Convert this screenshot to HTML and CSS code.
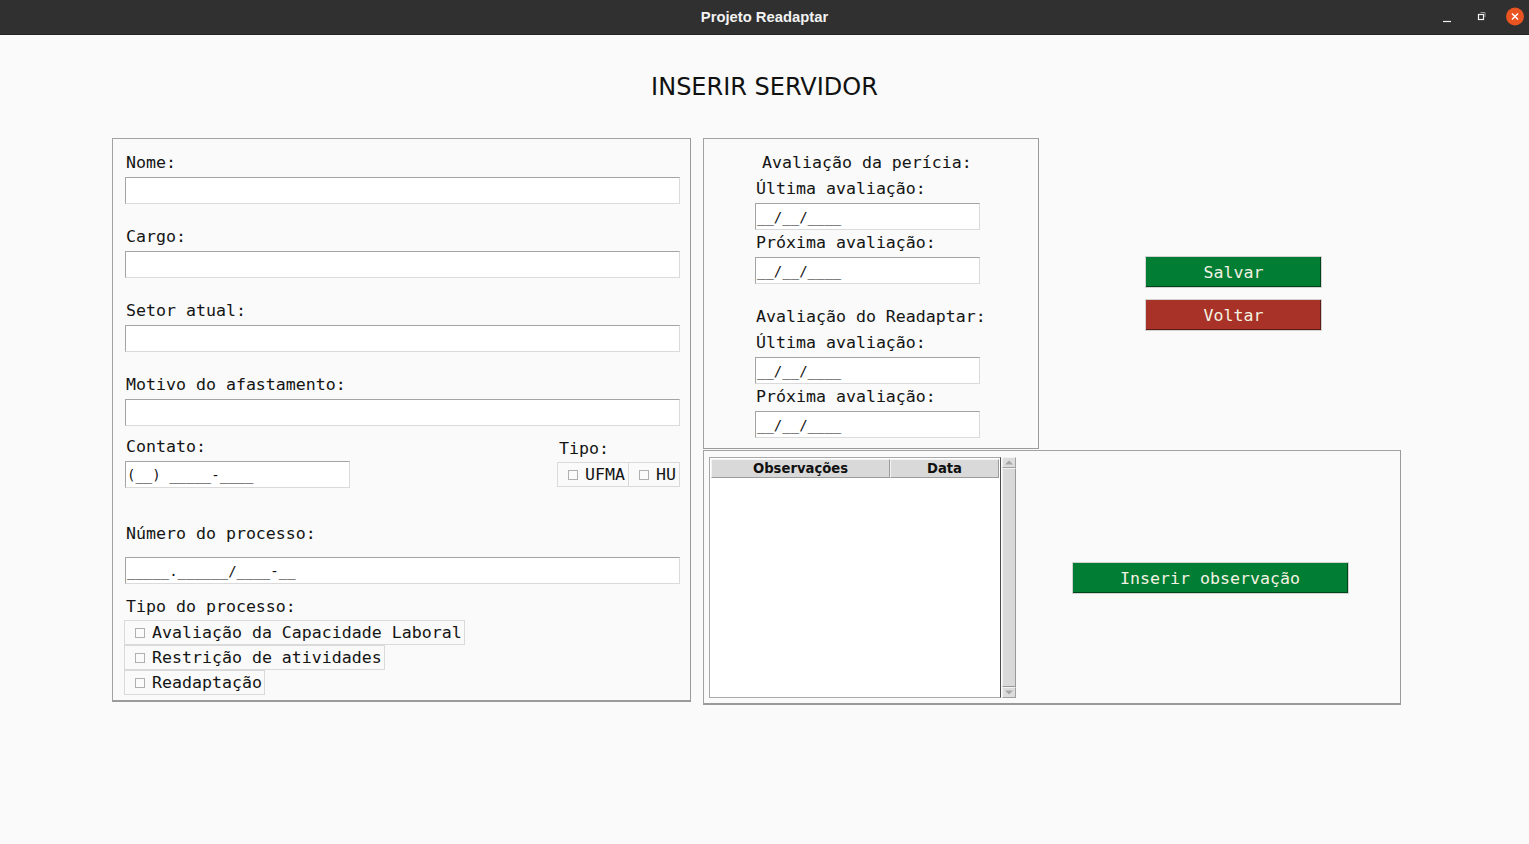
FILE: index.html
```html
<!DOCTYPE html>
<html lang="pt-BR">
<head>
<meta charset="utf-8">
<title>Projeto Readaptar</title>
<link rel="stylesheet" href="styles.css">
</head>
<body>
<header class="titlebar">
  <div></div>
  <div class="title">Projeto Readaptar</div>
  <div class="controls">
    <span class="ctl"><svg width="18" height="18" viewBox="0 0 18 18"><path d="M5 14.5h8" stroke="#f2f2f2" stroke-width="1.2"/></svg></span>
    <span class="ctl"><svg width="18" height="18" viewBox="0 0 18 18"><rect x="6.5" y="7.5" width="5" height="5" fill="none" stroke="#f2f2f2" stroke-width="1.2"/><path d="M8.5 5.5h4.5v4.5" fill="none" stroke="#9a9a9a" stroke-width="1"/></svg></span>
    <span class="ctl close"><svg width="19" height="19" viewBox="0 0 19 19"><circle cx="9.5" cy="9.5" r="9.5" fill="#e95420"/><path d="M6.3 6.3l6.4 6.4M12.7 6.3l-6.4 6.4" stroke="#fff" stroke-width="1.5"/></svg></span>
  </div>
</header>

<main class="window">
  <h1 class="heading">INSERIR SERVIDOR</h1>

  <div class="content">
    <section class="frame form">
      <div class="lbl first">Nome:</div>
      <div class="entry"></div>
      <div class="lbl gap">Cargo:</div>
      <div class="entry"></div>
      <div class="lbl gap">Setor atual:</div>
      <div class="entry"></div>
      <div class="lbl gap">Motivo do afastamento:</div>
      <div class="entry"></div>

      <div class="contact-row">
        <div class="contact">
          <div class="lbl">Contato:</div>
          <div class="entry short">(__) _____-____</div>
        </div>
        <div class="tipo">
          <div class="lbl tipo-lbl">Tipo:</div>
          <div class="checks-inline">
            <span class="check"><span class="ind"></span>UFMA</span>
            <span class="check hu"><span class="ind"></span>HU</span>
          </div>
        </div>
      </div>

      <div class="lbl numero">Número do processo:</div>
      <div class="entry numero-entry">_____.______/____-__</div>

      <div class="lbl tipo-proc">Tipo do processo:</div>
      <div class="checks-col">
        <span class="check"><span class="ind"></span>Avaliação da Capacidade Laboral</span>
        <span class="check"><span class="ind"></span>Restrição de atividades</span>
        <span class="check"><span class="ind"></span>Readaptação</span>
      </div>
    </section>

    <div class="right">
      <div class="right-top">
        <section class="frame dates">
          <div class="lbl d-title">Avaliação da perícia:</div>
          <div class="lbl d-ultima">Última avaliação:</div>
          <div class="entry date">__/__/____</div>
          <div class="lbl d-prox">Próxima avaliação:</div>
          <div class="entry date">__/__/____</div>
          <div class="lbl d-title2">Avaliação do Readaptar:</div>
          <div class="lbl d-ultima">Última avaliação:</div>
          <div class="entry date">__/__/____</div>
          <div class="lbl d-prox">Próxima avaliação:</div>
          <div class="entry date">__/__/____</div>
        </section>
        <div class="actions">
          <button class="btn green">Salvar</button>
          <button class="btn red">Voltar</button>
        </div>
      </div>

      <section class="frame obs">
        <div class="tree-wrap">
          <div class="tree">
            <div class="tree-head">
              <div class="th th-obs">Observações</div>
              <div class="th th-data">Data</div>
            </div>
            <div class="tree-body"></div>
          </div>
          <div class="scrollbar">
            <div class="arrow"><svg width="12" height="9" viewBox="0 0 12 9"><path d="M2 6.5h8L6 2.5z" fill="#a6a6a6"/></svg></div>
            <div class="trough"></div>
            <div class="arrow"><svg width="12" height="9" viewBox="0 0 12 9"><path d="M2 2.5h8L6 6.5z" fill="#a6a6a6"/></svg></div>
          </div>
        </div>
        <div class="obs-actions">
          <button class="btn green wide">Inserir observação</button>
        </div>
      </section>
    </div>
  </div>
</main>
</body>
</html>
```

FILE: styles.css
```css
* { box-sizing: border-box; }

html, body {
  margin: 0;
  padding: 0;
  background: #f9faf9;
}

body {
  width: 1529px;
  height: 844px;
  overflow: hidden;
  font-family: "DejaVu Sans Mono", monospace;
  font-size: 16.6px;
  color: #141414;
}

/* title bar */
.titlebar {
  height: 35px;
  background: #303030;
  border-bottom: 1px solid #242424;
  display: grid;
  grid-template-columns: 1fr auto 1fr;
  align-items: center;
}
.title {
  font-family: "Liberation Sans", Arial, sans-serif;
  font-weight: bold;
  font-size: 14.8px;
  color: #f2f2f2;
  padding-bottom: 1px;
}
.controls {
  justify-self: end;
  display: flex;
  align-items: center;
  gap: 16px;
  padding-right: 5px;
  padding-bottom: 2px;
}
.ctl { display: flex; width: 18px; height: 19px; align-items: center; justify-content: center; }
.ctl svg { display: block; }

/* heading */
.heading {
  margin: 38px 0 37px;
  height: 28px;
  line-height: 28px;
  text-align: center;
  font-family: "DejaVu Sans", sans-serif;
  font-weight: normal;
  font-size: 24px;
  color: #111;
}

.content {
  display: flex;
  align-items: flex-start;
  padding-left: 112px;
}

.frame {
  border: 1px solid #a2a2a2;
  border-bottom: 2px solid #9a9a9a;
  border-right-color: #9a9a9a;
  background: #f9faf9;
}

.lbl {
  height: 20px;
  line-height: 20px;
  padding-left: 1px;
  white-space: pre;
}

.entry {
  width: 555px;
  height: 27px;
  margin-top: 4px;
  padding: 2px 1px 0;
  font-family: "DejaVu Sans Mono", monospace;
  font-size: 14px;
  line-height: 23px;
  white-space: pre;
  color: #111;
  background: #ffffff;
  border: 1px solid;
  border-color: #a4a4a4 #dadada #dadada #a4a4a4;
}

/* left form */
.form {
  width: 579px;
  height: 564px;
  padding: 14px 10px 0 12px;
}
.lbl.gap { margin-top: 23px; }

.contact-row {
  display: flex;
  justify-content: space-between;
  margin-top: 11px;
}
.entry.short { width: 225px; }
.tipo-lbl { margin-top: 2px; margin-left: 1px; }
.checks-inline { display: flex; margin-top: 3px; }

.check {
  display: inline-flex;
  align-items: center;
  height: 25px;
  border: 1px solid #dadada;
  padding: 0 2px 0 10px;
  white-space: pre;
  line-height: 20px;
}
.checks-inline .check { padding-right: 3px; }
.checks-inline .check.hu { border-left: none; padding-left: 10px; }
.ind {
  display: inline-block;
  width: 10px;
  height: 10px;
  border: 1px solid #b0b0b0;
  background: #fbfbfb;
  margin-right: 7px;
}

.lbl.numero { margin-top: 36px; }
.numero-entry { margin-top: 13px; }
.lbl.tipo-proc { margin-top: 13px; }
.checks-col {
  display: flex;
  flex-direction: column;
  align-items: flex-start;
  margin-top: 3px;
  margin-left: -1px;
}

/* right column */
.right {
  margin-left: 12px;
  display: flex;
  flex-direction: column;
}
.right-top {
  display: flex;
  align-items: flex-start;
}
.dates {
  width: 336px;
  height: 311px;
  padding: 13px 0 0 51px;
  border-bottom-width: 1px;
}
.dates .lbl { line-height: 22px; }
.entry.date { width: 225px; margin-top: 5px; }
.d-title { margin-left: 6px; }
.d-ultima { margin-top: 6px; }
.d-prox { margin-top: 2px; }
.d-title2 { margin-top: 22px; }

.actions {
  margin-left: 106px;
  margin-top: 118px;
  display: flex;
  flex-direction: column;
  gap: 11px;
}

.btn {
  display: block;
  width: 177px;
  height: 32px;
  padding: 0;
  font-family: "DejaVu Sans Mono", monospace;
  font-size: 16.6px;
  color: #f4f2e2;
  border: 1px solid #d2d2d2;
  box-shadow: inset -1px -1px 0 rgba(0, 0, 0, 0.45);
  border-radius: 0;
  cursor: pointer;
}
.btn.green { background: #017d34; }
.btn.red { background: #a83227; }
.btn.wide { width: 277px; }

.obs {
  width: 698px;
  height: 255px;
  margin-top: 1px;
  padding: 6px 0 0 5px;
  display: flex;
  align-items: flex-start;
}
.tree-wrap {
  display: flex;
  height: 241px;
}
.tree {
  width: 292px;
  height: 241px;
  border: 1px solid #a8a8a8;
  border-right: 1px solid #4a4a4a;
  background: #fff;
  display: flex;
  flex-direction: column;
}
.tree-head {
  display: flex;
  height: 20px;
  padding: 1px 1px 0;
}
.th {
  height: 19px;
  line-height: 17px;
  background: #d9d9d9;
  border: 1px solid;
  border-color: #f4f4f4 #9c9c9c #9c9c9c #f4f4f4;
  text-align: center;
  font-family: "DejaVu Sans", sans-serif;
  font-weight: bold;
  font-size: 13.2px;
  color: #111;
}
.th-obs { width: 179px; }
.th-data { flex: 1; }
.tree-body { flex: 1; background: #fff; }

.scrollbar {
  width: 14px;
  height: 241px;
  margin-left: 1px;
  display: flex;
  flex-direction: column;
  background: #d9d9d9;
}
.arrow {
  height: 11px;
  border: 1px solid;
  border-color: #f2f2f2 #a0a0a0 #a0a0a0 #f2f2f2;
  display: flex;
  align-items: center;
  justify-content: center;
  background: #dcdcdc;
}
.arrow svg { display: block; }
.trough {
  flex: 1;
  border: 1px solid;
  border-color: #f2f2f2 #9a9a9a #9a9a9a #f2f2f2;
  background: #d9d9d9;
}

.obs-actions {
  flex: 1;
  height: 100%;
  display: flex;
  align-items: center;
  justify-content: center;
  padding-left: 4px;
  padding-bottom: 4px;
}
```
